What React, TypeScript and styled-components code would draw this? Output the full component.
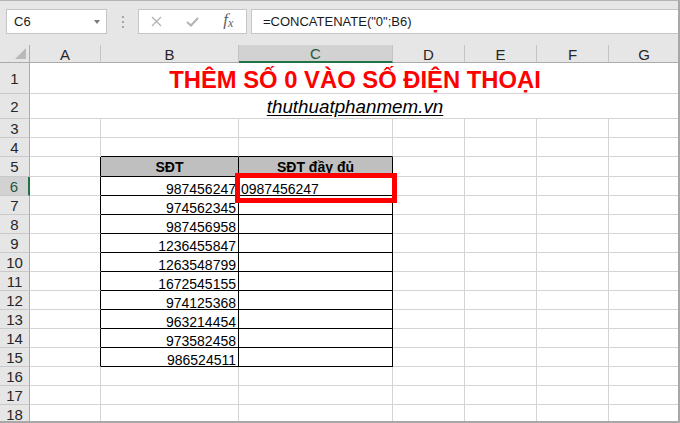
import styled, { createGlobalStyle } from 'styled-components';

const GlobalStyle = createGlobalStyle`
	body {
		margin: 0;
		font-family: 'Liberation Sans', Arial, sans-serif;
		color: #000;
	}
`;

const Window = styled.div`
	width: 680px;
	height: 423px;
	box-sizing: border-box;
	background: #e6e6e6;
	border-top: 1px solid #b4b4b4;
	border-right: 2px solid #a8a8a8;
	border-bottom: 2px solid #a8a8a8;
	overflow: hidden;
	display: flex;
	flex-direction: column;
`;

const FormulaBar = styled.div`
	height: 44px;
	flex-shrink: 0;
	box-sizing: border-box;
	display: flex;
	align-items: flex-start;
	padding: 8px 0 0 6px;
`;

const Field = styled.div`
	height: 25px;
	box-sizing: border-box;
	background: #fff;
	border: 1px solid #c6c6c6;
	display: flex;
	align-items: center;
	font-size: 13px;
	color: #1a1a1a;
`;

const NameBox = styled(Field)`
	width: 101px;
	justify-content: space-between;
	padding: 0 6px 0 7px;
`;

const DropArrow = styled.span`
	width: 0;
	height: 0;
	border-left: 3.5px solid transparent;
	border-right: 3.5px solid transparent;
	border-top: 4px solid #7a7a7a;
`;

const Grip = styled.div`
	height: 25px;
	margin: 0 14px 0 15px;
	display: flex;
	flex-direction: column;
	justify-content: center;
	gap: 3px;
`;

const Dot = styled.span`
	width: 2px;
	height: 2px;
	background: #a6a6a6;
`;

const FxBox = styled(Field)`
	width: 109px;
	padding: 0;
`;

const IconSlot = styled.div`
	flex: 1;
	height: 100%;
	display: flex;
	align-items: center;
	justify-content: center;
`;

const FxText = styled.span`
	font-family: 'Liberation Serif', 'Times New Roman', serif;
	font-style: italic;
	font-size: 17px;
	color: #5f5f5f;
	margin-top: -3px;

	small {
		font-size: 12px;
		position: relative;
		top: 2px;
	}
`;

const FormulaInput = styled(Field)`
	flex: 1;
	margin-left: 4px;
	padding-left: 11px;
	border-right: none;
	white-space: nowrap;
`;

const Sheet = styled.div`
	flex: 1;
	display: grid;
	grid-template-columns: 30px 71px 138px 154px 72px 72px 72px 71px;
	grid-template-rows: 18px 31px 25px 19px 19px 20px repeat(13, 19px);
	background: #fff;
	overflow: hidden;
`;

const Corner = styled.div`
	background: #e6e6e6;
	border-right: 1px solid #ababab;
	border-bottom: 1px solid #ababab;
	box-sizing: border-box;
	display: flex;
	align-items: flex-end;
	justify-content: flex-end;
	padding: 0 3px 3px 0;
`;

const CornerMark = styled.span`
	width: 0;
	height: 0;
	border-left: 11px solid transparent;
	border-bottom: 11px solid #b9b9b9;
`;

const ColHead = styled.div<{ $active?: boolean }>`
	box-sizing: border-box;
	display: flex;
	align-items: center;
	justify-content: center;
	font-size: 15px;
	padding-top: 1px;
	background: ${(p) => (p.$active ? '#d2d2d2' : '#e6e6e6')};
	color: ${(p) => (p.$active ? '#22573f' : '#262626')};
	border-right: 1px solid #c3c3c3;
	border-bottom: ${(p) => (p.$active ? '2px solid #217346' : '1px solid #ababab')};
`;

const RowHead = styled.div<{ $active?: boolean }>`
	box-sizing: border-box;
	display: flex;
	align-items: center;
	justify-content: center;
	font-size: 15px;
	background: ${(p) => (p.$active ? '#d2d2d2' : '#e6e6e6')};
	color: ${(p) => (p.$active ? '#22573f' : '#262626')};
	border-bottom: 1px solid #c9c9c9;
	border-right: ${(p) => (p.$active ? '2px solid #217346' : '1px solid #ababab')};
`;

type Align = 'left' | 'center' | 'right';

const Cell = styled.div<{
	$right?: string;
	$bottom?: string;
	$fill?: string;
	$align?: Align;
	$bold?: boolean;
	$middle?: boolean;
}>`
	box-sizing: border-box;
	position: relative;
	display: flex;
	align-items: ${(p) => (p.$middle ? 'center' : 'flex-end')};
	justify-content: ${(p) =>
		p.$align === 'right' ? 'flex-end' : p.$align === 'center' ? 'center' : 'flex-start'};
	padding: 0 2px;
	border-right: 1px solid ${(p) => p.$right ?? '#d4d4d4'};
	border-bottom: 1px solid ${(p) => p.$bottom ?? '#d4d4d4'};
	background: ${(p) => p.$fill ?? '#fff'};
	font-size: 14px;
	line-height: ${(p) => (p.$middle ? '16px' : '12px')};
	font-weight: ${(p) => (p.$bold ? 700 : 400)};
	white-space: nowrap;
`;

const Merged = styled.div`
	grid-column: 2 / 9;
	box-sizing: border-box;
	display: flex;
	align-items: flex-end;
	justify-content: center;
	padding-bottom: 2px;
	border-bottom: 1px solid #d4d4d4;
	white-space: nowrap;
`;

const Title = styled.span`
	font-size: 23.8px;
	line-height: 23px;
	font-weight: 700;
	color: #ff0000;
`;

const Site = styled.span`
	font-size: 18.8px;
	line-height: 18px;
	font-style: italic;
	text-decoration: underline;
	text-underline-offset: 2px;
	color: #000;
`;

const Highlight = styled.div`
	position: absolute;
	left: -4px;
	top: -4px;
	width: 162px;
	height: 30px;
	box-sizing: border-box;
	border: 5px solid #ff0000;
	z-index: 2;
`;

const columns = ['A', 'B', 'C', 'D', 'E', 'F', 'G'];

const phones = [
	'987456247',
	'974562345',
	'987456958',
	'1236455847',
	'1263548799',
	'1672545155',
	'974125368',
	'963214454',
	'973582458',
	'986524511',
];

const BLACK = '#000';

const App = () => {
	const gridRows = [];
	for (let r = 3; r <= 18; r++) {
		const inTable = r >= 5 && r <= 15;
		gridRows.push(
			<RowHead key={`h${r}`} $active={r === 6}>
				{r}
			</RowHead>,
		);
		columns.forEach((col, c) => {
			const isTableCol = c === 1 || c === 2;
			let right: string | undefined;
			let bottom: string | undefined;
			if (inTable && (isTableCol || c === 0)) right = BLACK;
			if ((inTable || r === 4) && isTableCol) bottom = BLACK;

			let content: string | null = null;
			let align: Align = 'left';
			let bold = false;
			let middle = false;
			let fill: string | undefined;
			if (r === 5 && isTableCol) {
				content = c === 1 ? 'SĐT' : 'SĐT đầy đủ';
				align = 'center';
				bold = true;
				middle = true;
				fill = '#bfbfbf';
			} else if (inTable && c === 1) {
				content = phones[r - 6];
				align = 'right';
			} else if (r === 6 && c === 2) {
				content = '0987456247';
			}

			gridRows.push(
				<Cell
					key={`${col}${r}`}
					$right={right}
					$bottom={bottom}
					$fill={fill}
					$align={align}
					$bold={bold}
					$middle={middle}
				>
					{content}
					{r === 6 && c === 2 && <Highlight />}
				</Cell>,
			);
		});
	}

	return (
		<>
			<GlobalStyle />
			<Window>
				<FormulaBar>
					<NameBox>
						C6
						<DropArrow />
					</NameBox>
					<Grip>
						<Dot />
						<Dot />
						<Dot />
					</Grip>
					<FxBox>
						<IconSlot>
							<svg width="11" height="11" viewBox="0 0 11 11">
								<path d="M1 1L10 10M10 1L1 10" stroke="#b4b4b4" strokeWidth="1.4" fill="none" />
							</svg>
						</IconSlot>
						<IconSlot>
							<svg width="13" height="10" viewBox="0 0 13 10">
								<path d="M1 5L5 8.5L12 1" stroke="#b4b4b4" strokeWidth="2" fill="none" />
							</svg>
						</IconSlot>
						<IconSlot>
							<FxText>
								f<small>x</small>
							</FxText>
						</IconSlot>
					</FxBox>
					<FormulaInput>=CONCATENATE("0";B6)</FormulaInput>
				</FormulaBar>
				<Sheet>
					<Corner>
						<CornerMark />
					</Corner>
					{columns.map((col) => (
						<ColHead key={col} $active={col === 'C'}>
							{col}
						</ColHead>
					))}
					<RowHead>1</RowHead>
					<Merged>
						<Title>THÊM SỐ 0 VÀO SỐ ĐIỆN THOẠI</Title>
					</Merged>
					<RowHead>2</RowHead>
					<Merged>
						<Site>thuthuatphanmem.vn</Site>
					</Merged>
					{gridRows}
				</Sheet>
			</Window>
		</>
	);
};

export default App;
